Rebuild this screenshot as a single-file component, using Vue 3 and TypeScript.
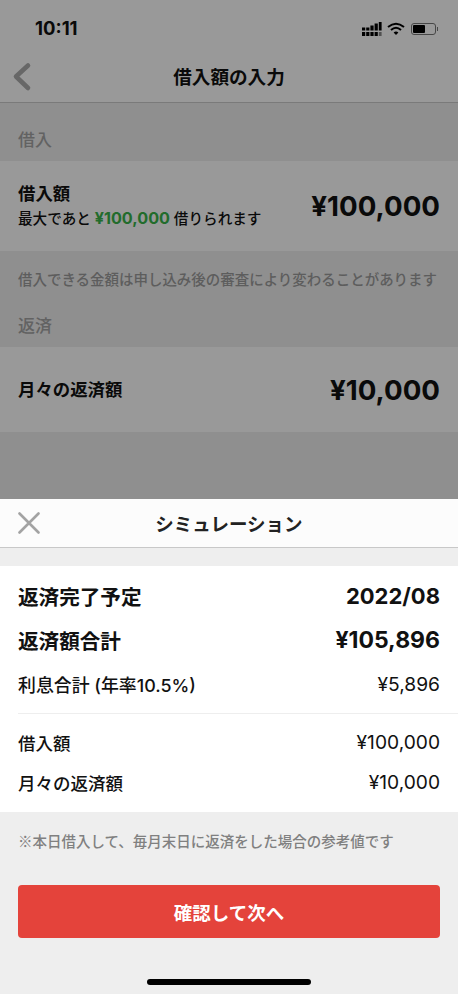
<script setup lang="ts">
interface Row { label: string; value: string; kind: string }
const rows: Row[] = [
  { label: '返済完了予定', value: '2022/08', kind: 'big' },
  { label: '返済額合計', value: '¥105,896', kind: 'big money' },
  { label: '利息合計 (年率10.5%)', value: '¥5,896', kind: 'small tall' },
]
const rows2: Row[] = [
  { label: '借入額', value: '¥100,000', kind: 'small' },
  { label: '月々の返済額', value: '¥10,000', kind: 'small' },
]
</script>

<template>
  <div class="screen">
    <div class="page">
      <div class="status">
        <span class="time">10:11</span>
        <div class="status-icons">
          <svg width="20" height="15" viewBox="0 0 20 15" fill="#000">
            <rect x="0" y="5.5" width="3.2" height="3" /><rect x="4.2" y="5.5" width="3.2" height="3" /><rect x="8.4" y="3.5" width="3.2" height="5" /><rect x="12.6" y="1.5" width="3.2" height="7" /><rect x="16.8" y="0" width="2.8" height="8.5" />
            <rect x="0" y="10" width="3.2" height="4" /><rect x="4.2" y="10" width="3.2" height="4" /><rect x="8.4" y="10" width="3.2" height="4" /><rect x="12.6" y="10" width="3.2" height="4" /><rect x="16.8" y="10" width="2.8" height="4" fill="#888" />
          </svg>
          <svg width="18" height="14" viewBox="0 0 18 14" fill="none" stroke="#000" stroke-width="2">
            <path d="M1 5 Q9 -1.5 17 5" /><path d="M4 8 Q9 3.5 14 8" /><path d="M9 13 L6.6 10.4 Q9 8.6 11.4 10.4 Z" fill="#000" stroke="none" />
          </svg>
          <div class="battery"><div class="battery-fill"></div></div>
          <div class="battery-cap"></div>
        </div>
      </div>
      <header class="nav">
        <svg class="back" width="22" height="30" viewBox="0 0 22 30" fill="none" stroke="#acacac" stroke-width="4.6" stroke-linecap="round" stroke-linejoin="round">
          <path d="M18 3.5 L6 14.5 L18 26" />
        </svg>
        <h1 class="nav-title">借入額の入力</h1>
      </header>

      <div class="section-label">借入</div>
      <div class="field">
        <div>
          <div class="field-name">借入額</div>
          <div class="field-hint">最大であと <b class="green">¥100,000</b> 借りられます</div>
        </div>
        <div class="amount">¥100,000</div>
      </div>
      <p class="note">借入できる金額は申し込み後の審査により変わることがあります</p>
      <div class="section-label second">返済</div>
      <div class="field field-second">
        <div class="field-name">月々の返済額</div>
        <div class="amount">¥10,000</div>
      </div>
    </div>

    <div class="overlay"></div>

    <section class="sheet">
      <header class="sheet-head">
        <svg class="close" width="22" height="22" viewBox="0 0 22 22" stroke="#a3a3a3" stroke-width="2.6" fill="none" stroke-linecap="round">
          <path d="M1.5 1.5 L20.5 20.5 M20.5 1.5 L1.5 20.5" />
        </svg>
        <h2 class="sheet-title">シミュレーション</h2>
      </header>
      <div class="sheet-gap"></div>
      <div class="summary">
        <div class="group">
          <div v-for="r in rows" :key="r.label" class="row" :class="r.kind">
            <span>{{ r.label }}</span><span class="num">{{ r.value }}</span>
          </div>
        </div>
        <div class="divider"></div>
        <div class="group group-two">
          <div v-for="r in rows2" :key="r.label" class="row" :class="r.kind">
            <span>{{ r.label }}</span><span class="num">{{ r.value }}</span>
          </div>
        </div>
      </div>
      <div class="foot">
        <p class="foot-note">※本日借入して、毎月末日に返済をした場合の参考値です</p>
        <button class="cta">確認して次へ</button>
        <div class="home"></div>
      </div>
    </section>
  </div>
</template>

<style>
html, body { margin: 0; padding: 0; }
</style>

<style scoped>
.screen {
  position: relative;
  width: 458px;
  height: 994px;
  overflow: hidden;
  font-family: Inter, "Noto Sans CJK JP", sans-serif;
  color: #111;
  background: #eeeeee;
}
.page { height: 100%; }
.status {
  height: 52px;
  box-sizing: border-box;
  padding: 17px 20px 0 35px;
  display: flex;
  justify-content: space-between;
  align-items: flex-start;
  background: #fff;
}
.time { font-size: 18.5px; font-weight: 700; line-height: 22px; }
.status-icons { display: flex; align-items: center; gap: 5px; height: 20px; padding-top: 2px; }
.battery {
  width: 25px; height: 12px; box-sizing: border-box; margin-left: 1px;
  border: 1px solid #777; border-radius: 3px; padding: 1px;
}
.battery-fill { width: 12px; height: 100%; background: #000; border-radius: 1px; }
.battery-cap { width: 1px; height: 4px; background: #777; margin-left: -4px; }
.nav {
  position: relative;
  height: 50px;
  display: flex;
  align-items: center;
  justify-content: center;
  background: #fff;
  border-bottom: 1px solid #ccc;
}
.back { position: absolute; left: 10px; top: 10px; }
.nav-title { margin: 0; font-size: 18.6px; font-weight: 700; line-height: 50px; }
.section-label {
  height: 58px;
  box-sizing: border-box;
  padding: 25px 18px 0;
  font-size: 17px;
  line-height: 24px;
  font-weight: 500;
  color: #a4a4a4;
}
.section-label.second { height: 52px; padding-top: 19px; }
.field {
  height: 90px;
  box-sizing: border-box;
  padding: 0 18px;
  background: #fff;
  display: flex;
  align-items: center;
  justify-content: space-between;
}
.field-second { height: 85px; }
.field-name { font-size: 17.4px; font-weight: 700; line-height: 24px; }
.field-hint { font-size: 14.6px; line-height: 24px; font-weight: 500; }
.green { color: #39b54a; font-weight: 700; font-size: 16.2px; }
.amount { font-size: 27.7px; font-weight: 700; }
.note {
  margin: 0;
  box-sizing: border-box;
  padding: 18px 18px 0;
  height: 44px;
  font-size: 14.47px;
  line-height: 22px;
  font-weight: 500;
  color: #9c9c9c;
  white-space: nowrap;
}
.overlay { position: absolute; inset: 0; background: rgba(0, 0, 0, 0.4); }
.sheet {
  position: absolute;
  left: 0;
  right: 0;
  bottom: 0;
  height: 495px;
  background: #eeeeee;
}
.sheet-head {
  position: relative;
  height: 49px;
  box-sizing: border-box;
  background: #fcfcfc;
  border-bottom: 1px solid #c8c8c8;
  display: flex;
  align-items: center;
  justify-content: center;
}
.close { position: absolute; left: 18px; top: 13px; }
.sheet-title { margin: 0; font-size: 18.5px; font-weight: 700; color: #222; }
.sheet-gap { height: 18px; }
.summary { background: #fff; height: 246px; box-sizing: border-box; padding-left: 18px; padding-top: 8px; }
.group { padding-right: 18px; }
.divider { height: 1px; background: #eee; margin-top: 8px; }
.group-two { padding-top: 8px; }
.row { display: flex; justify-content: space-between; align-items: center; }
.row.big { height: 44px; font-size: 20.6px; font-weight: 700; }
.row.small { height: 40px; font-size: 17.5px; font-weight: 500; }
.row.tall { height: 43px; font-size: 17.9px; }
.row.big .num { font-size: 22px; }
.row.money .num { font-size: 23px; }
.row.small .num { font-size: 19.2px; font-weight: 400; }
.foot { padding: 0 18px; position: relative; height: 182px; }
.foot-note { margin: 0; padding-top: 18px; font-family: "Noto Sans CJK JP", sans-serif; font-size: 14.5px; line-height: 22px; font-weight: 500; color: #808080; white-space: nowrap; }
.cta {
  display: block;
  width: 100%;
  height: 53px;
  margin-top: 33px;
  border: none;
  border-radius: 4px;
  background: #e4433b;
  color: #fff;
  font-family: inherit;
  font-size: 18.5px;
  font-weight: 700;
}
.home {
  position: absolute;
  left: 147px;
  bottom: 9px;
  width: 164px;
  height: 6px;
  border-radius: 3px;
  background: #000;
}
</style>
